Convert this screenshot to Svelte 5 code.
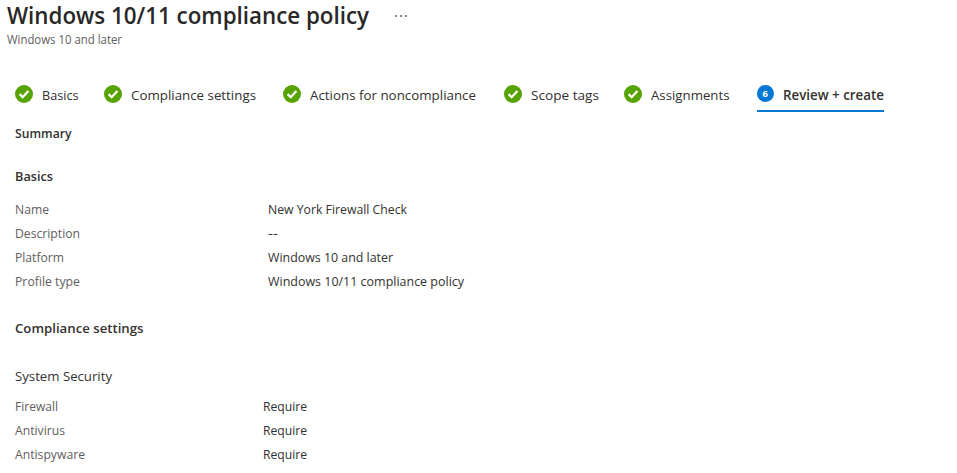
<script>
  const steps = [
    { label: 'Basics', width: 36.5, gap: 0 },
    { label: 'Compliance settings', width: 125, gap: 25.5 },
    { label: 'Actions for noncompliance', width: 166, gap: 27 },
    { label: 'Scope tags', width: 68, gap: 28.3 },
    { label: 'Assignments', width: 78.5, gap: 25 }
  ];
  const basics = [
    ['Name', 34, 'New York Firewall Check', 139],
    ['Description', 65, '--', 10],
    ['Platform', 49, 'Windows 10 and later', 125],
    ['Profile type', 65, 'Windows 10/11 compliance policy', 196]
  ];
  const security = [
    ['Firewall', 43, 'Require', 44],
    ['Antivirus', 50, 'Require', 44],
    ['Antispyware', 70, 'Require', 44]
  ];
</script>

{#snippet fit(text, width, size, weight, height = 24, baseline = 17)}
  <svg class="fit" {width} {height}><text x="0" y={baseline} textLength={width} lengthAdjust="spacingAndGlyphs" style:font-size="{size}px" style:font-weight={weight}>{text}</text></svg>
{/snippet}

<main>
  <header>
    <div class="title"><h1>{@render fit('Windows 10/11 compliance policy', 362, 23.5, 600, 31, 24)}</h1><span class="dots"><i></i><i></i><i></i></span></div>
    <p>{@render fit('Windows 10 and later', 115, 12, 400)}</p>
  </header>
  <nav>
    {#each steps as s}
      <div class="step" style:margin-left="{s.gap}px">
        <svg class="check" width="18" height="18" viewBox="0 0 18 18"><circle cx="9" cy="9" r="9" fill="#57a300"/><path d="M4.6 9.1l3.1 3.1 5.7-6.3" fill="none" stroke="#fff" stroke-width="2.3"/></svg>
        <span>{@render fit(s.label, s.width, 13.5, 400, 24, 16)}</span>
      </div>
    {/each}
    <div class="step current">
      <b>6</b><span>{@render fit('Review + create', 101, 13.5, 600, 24, 16)}</span>
    </div>
  </nav>
  <section>
    <h2 class="summary">{@render fit('Summary', 56.5, 12.5, 600)}</h2>
    <h2 class="basics">{@render fit('Basics', 38, 13.3, 600)}</h2>
    <dl>{#each basics as r}<div><dt>{@render fit(r[0], r[1], 12.7, 400)}</dt><dd>{@render fit(r[2], r[3], 12.7, 400)}</dd></div>{/each}</dl>
    <h2 class="settings">{@render fit('Compliance settings', 128.5, 13.3, 600)}</h2>
    <h3>{@render fit('System Security', 97, 13.3, 400)}</h3>
    <dl class="security">{#each security as r}<div><dt>{@render fit(r[0], r[1], 12.7, 400)}</dt><dd>{@render fit(r[2], r[3], 12.7, 400)}</dd></div>{/each}</dl>
  </section>
</main>

<style>
  :global(body) { margin: 0; background: #fff; }
  main { width: 957px; height: 473px; overflow: hidden; background: #fff; color: #323130; font-family: "Open Sans", "Noto Sans", sans-serif; }
  h1, h2, h3, p, dl, dt, dd { margin: 0; }
  .fit { display: block; overflow: visible; fill: currentColor; }
  header { height: 84px; padding-left: 7px; box-sizing: border-box; }
  .title { display: flex; height: 31px; }
  h1 { color: #292827; }
  .dots { display: flex; gap: 3px; padding: 15px 0 0 26px; }
  .dots i { width: 2px; height: 2px; border-radius: 1px; background: #605e5c; }
  p { color: #605e5c; margin-top: -4px; }
  nav { display: flex; height: 28px; padding-left: 15px; }
  .step { display: flex; gap: 9px; height: 28px; }
  .check { margin-top: 0.7px; }
  .current { margin-left: 27px; box-sizing: border-box; border-bottom: 2px solid #0078d4; }
  b { width: 17px; height: 17px; margin-top: 1px; border-radius: 50%; background: #0078d4; color: #fff; font-size: 9.5px; line-height: 17px; text-align: center; }
  section { padding-left: 15px; }
  .summary { padding-top: 9px; }
  .basics { margin-top: 19px; }
  dl { margin-top: 9px; color: #605e5c; }
  dl div { display: flex; height: 24px; }
  dt { width: 253px; }
  dd { color: #323130; }
  .settings { margin-top: 23px; }
  h3 { margin-top: 24px; }
  .security { margin-top: 6px; }
  .security dt { width: 248px; }
</style>
